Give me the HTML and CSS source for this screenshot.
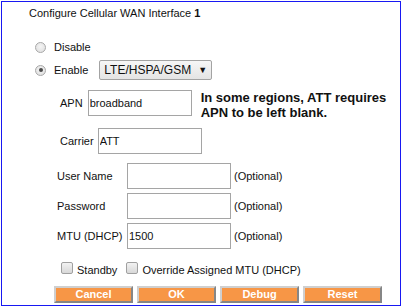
FILE: index.html
```html
<!DOCTYPE html>
<html>
<head>
<meta charset="utf-8">
<link rel="stylesheet" href="styles.css">
</head>
<body>
<div class="frame">
  <div class="title">Configure Cellular WAN Interface <b>1</b></div>

  <div class="radio-row r-disable">
    <span class="radio"></span><span class="rlabel">Disable</span>
  </div>
  <div class="radio-row r-enable">
    <span class="radio checked"></span><span class="rlabel">Enable</span>
    <span class="select">LTE/HSPA/GSM<span class="arrow">&#9660;</span></span>
  </div>

  <div class="apn-row">
    <span class="lbl">APN</span>
    <input class="field apn-field" type="text" value="broadband">
    <div class="note">In some regions, ATT requires<br>APN to be left blank.</div>
  </div>

  <div class="carrier-row">
    <span class="lbl">Carrier</span>
    <input class="field carrier-field" type="text" value="ATT">
  </div>

  <div class="opt-rows">
    <div class="opt-row">
      <span class="olbl">User Name</span>
      <input class="field" type="text" value="">
      <span class="optional">(Optional)</span>
    </div>
    <div class="opt-row">
      <span class="olbl">Password</span>
      <input class="field" type="text" value="">
      <span class="optional">(Optional)</span>
    </div>
    <div class="opt-row">
      <span class="olbl">MTU (DHCP)</span>
      <input class="field" type="text" value="1500">
      <span class="optional">(Optional)</span>
    </div>
  </div>

  <div class="check-row">
    <span class="check"></span><span class="clabel">Standby</span>
    <span class="check second"></span><span class="clabel">Override Assigned MTU (DHCP)</span>
  </div>

  <div class="buttons">
    <span class="btn">Cancel</span>
    <span class="btn">OK</span>
    <span class="btn">Debug</span>
    <span class="btn">Reset</span>
  </div>
</div>
</body>
</html>
```
FILE: styles.css
```css
html, body {
  margin: 0;
  padding: 0;
  background: #ffffff;
}
body {
  font-family: "Liberation Sans", Arial, sans-serif;
  font-size: 11px;
  line-height: 13px;
  color: #111111;
}
.frame {
  margin: 1px;
  width: 400px;
  height: 305px;
  box-sizing: border-box;
  border: 1px solid #1818f2;
  overflow: hidden;
}
.title {
  margin-top: 5px;
  padding-left: 27px;
  height: 13px;
  color: #111;
}
.title b { font-weight: bold; }

.radio-row {
  display: flex;
  align-items: center;
  padding-left: 33px;
  height: 20px;
}
.r-disable { margin-top: 17px; }
.r-enable { margin-top: 3px; }
.radio {
  width: 11px;
  height: 11px;
  box-sizing: border-box;
  border-radius: 50%;
  border: 1px solid #a8a8a8;
  background: radial-gradient(circle at 50% 40%, #f4f4f4 0%, #dcdcdc 100%);
  position: relative;
  flex: none;
}
.radio.checked::after {
  content: "";
  position: absolute;
  left: 2.5px;
  top: 2.5px;
  width: 4px;
  height: 4px;
  border-radius: 50%;
  background: #4a4a4a;
}
.rlabel {
  margin-left: 8px;
}
.select {
  margin-left: 11px;
  height: 20px;
  width: 113px;
  box-sizing: border-box;
  border: 1px solid #a3a3a3;
  border-radius: 2px;
  background: linear-gradient(#f6f6f6, #e4e4e4);
  font-size: 12px;
  line-height: 18px;
  padding-left: 4px;
  display: flex;
  align-items: center;
  color: #111;
}
.arrow {
  font-size: 9px;
  margin-left: 7px;
}

.field {
  width: 104px;
  height: 26px;
  box-sizing: border-box;
  border: 1px solid #a5a5a5;
  margin: 0;
  padding: 0 1px;
  font-family: "Liberation Sans", Arial, sans-serif;
  font-size: 11px;
  color: #111;
  background: #fff;
  outline: none;
  flex: none;
}

.apn-row {
  display: flex;
  align-items: flex-start;
  margin-top: 10px;
  padding-left: 58px;
  height: 26px;
}
.apn-row .lbl {
  line-height: 26px;
}
.apn-field { margin-left: 5px; }
.note {
  margin-left: 9px;
  margin-top: 0;
  font-size: 13px;
  font-weight: bold;
  line-height: 15px;
  color: #111;
}

.carrier-row {
  display: flex;
  align-items: center;
  margin-top: 12px;
  padding-left: 58px;
  height: 26px;
}
.carrier-field { margin-left: 4px; }

.opt-rows {
  margin-top: 9px;
  padding-left: 55px;
  display: flex;
  flex-direction: column;
  gap: 4px;
}
.opt-row {
  display: flex;
  align-items: center;
  height: 26px;
}
.olbl {
  width: 70px;
  flex: none;
}
.optional {
  margin-left: 3px;
}

.check-row {
  display: flex;
  align-items: flex-start;
  margin-top: 13px;
  padding-left: 59px;
  height: 14px;
}
.check {
  width: 12px;
  height: 12px;
  box-sizing: border-box;
  border: 1px solid #a0a0a0;
  border-radius: 2px;
  background: linear-gradient(#f2f2f2, #d8d8d8);
  flex: none;
}
.check.second { margin-left: 9px; }
.clabel {
  margin-left: 4px;
  margin-top: 2px;
}

.buttons {
  display: flex;
  gap: 4px;
  margin-top: 10px;
  padding-left: 52px;
}
.btn {
  width: 79px;
  height: 17px;
  box-sizing: border-box;
  border: 2px solid;
  border-color: #cfcfcf #868686 #868686 #cfcfcf;
  background: #f79646;
  color: #ffffff;
  font-weight: bold;
  font-size: 11px;
  line-height: 13px;
  text-align: center;
}
```
